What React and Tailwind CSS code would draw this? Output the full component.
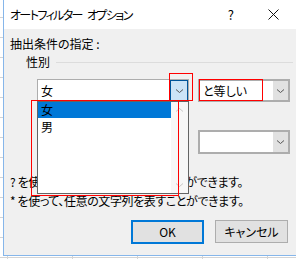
import React from "react";

function Chevron({ className = "" }) {
  return (
    <svg width="9" height="6" viewBox="0 0 9 6" className={className}>
      <path d="M1 1.5 L4.5 4.5 L8 1.5" fill="none" stroke="#555" strokeWidth="1" />
    </svg>
  );
}

function Combo({ value, width, height, thick, active }) {
  return (
    <div
      className={`flex bg-white ${thick ? "border-2 border-[#adadad]" : "border border-[#adadad]"}`}
      style={{ width, height }}
    >
      <div className="flex-1 flex items-center pl-[3px] text-[12px] leading-4 text-black">{value}</div>
      {active ? (
        <div className="w-[18px] flex items-center justify-center bg-[#cce4f7] border border-[#005499]">
          <Chevron />
        </div>
      ) : (
        <div className="w-[15px] flex items-center justify-center bg-[#e1e1e1]">
          <Chevron />
        </div>
      )}
    </div>
  );
}

export default function App() {
  return (
    <div
      className="relative w-[296px] h-[259px] overflow-hidden bg-white bg-[linear-gradient(90deg,#d4d4d4_1px,transparent_1px),linear-gradient(#d4d4d4_1px,transparent_1px)] bg-[size:65px_20px] bg-[position:7px_17px] [font-family:'Noto_Sans_CJK_JP','Liberation_Sans',sans-serif] [font-feature-settings:'palt']"
    >
      {/* dialog */}
      <div className="ml-[3px] w-[300px] h-[256px] flex flex-col border-l border-b border-[#86b6ea] bg-[#f0f0f0]">
        {/* title bar */}
        <div className="h-[29px] shrink-0 bg-white flex items-center pl-[6px] text-[12px] text-black">
          <div className="flex-1 flex tracking-[-1.6px]">
            <span>オートフィルター</span>
            <span className="ml-[5px]">オプション</span>
          </div>
          <span className="text-[13px]">?</span>
          <svg width="11" height="11" viewBox="0 0 11 11" className="ml-[34px] mr-[24px]">
            <path d="M0.5 0.5 L10.5 10.5 M10.5 0.5 L0.5 10.5" stroke="#111" strokeWidth="1" />
          </svg>
        </div>

        {/* body */}
        <div className="flex-1 flex flex-col pl-[6px] text-[12px] leading-4 text-black">
          <div className="mt-[7px]">抽出条件の指定 :</div>
          <div className="mt-[2px] ml-[16px] flex items-center">
            <span>性別</span>
            <div className="flex-1 h-px bg-[#dcdcdc] ml-[6px] mr-[10px]" />
          </div>
          <div className="mt-[9px] ml-[27px] flex gap-[9px]">
            <Combo value="女" width={152} height={23} active />
            <Combo value="と等しい" width={92} height={23} thick />
          </div>
          <div className="mt-[28px] ml-[188px]">
            <Combo value="" width={92} height={24} thick />
          </div>
          <div className="mt-[20px] tracking-[-0.4px]">? を使って、任意の 1 文字を表すことができます。</div>
          <div className="mt-[3px] tracking-[-0.4px]">* を使って、任意の文字列を表すことができます。</div>
          <div className="mt-[11px] ml-[121px] flex gap-[11px] items-start">
            <button className="w-[73px] h-[24px] bg-[#e1e1e1] border-2 border-[#0078d7] text-[12px]">OK</button>
            <button className="w-[73px] h-[23px] bg-[#e1e1e1] border border-[#adadad] text-[12px]">キャンセル</button>
          </div>
        </div>
      </div>

      {/* open dropdown list */}
      <div className="absolute left-[37px] top-[101px] w-[152px] h-[93px] bg-white border border-[#646464] flex text-[12px] leading-4 text-black">
        <div className="flex-1 flex flex-col">
          <div className="h-[16px] bg-[#0078d7] pl-[3px]">女</div>
          <div className="h-[16px] pl-[3px] mt-px">男</div>
        </div>
        <div className="w-[17px] bg-[#f7f7f7] flex flex-col items-center justify-between py-[5px]">
          <svg width="9" height="6" viewBox="0 0 9 6">
            <path d="M1 4.5 L4.5 1.5 L8 4.5" fill="none" stroke="#c8c8c8" strokeWidth="1" />
          </svg>
          <svg width="9" height="6" viewBox="0 0 9 6">
            <path d="M1 1.5 L4.5 4.5 L8 1.5" fill="none" stroke="#c8c8c8" strokeWidth="1" />
          </svg>
        </div>
      </div>

      {/* red annotation boxes */}
      <div className="absolute left-[169px] top-[73px] w-[24px] h-[28px] border border-[#ff0000]" />
      <div className="absolute left-[199px] top-[79px] w-[64px] h-[22px] border border-[#ff0000]" />
      <div className="absolute left-[31px] top-[100px] w-[148px] h-[96px] border border-[#ff0000]" />
    </div>
  );
}
